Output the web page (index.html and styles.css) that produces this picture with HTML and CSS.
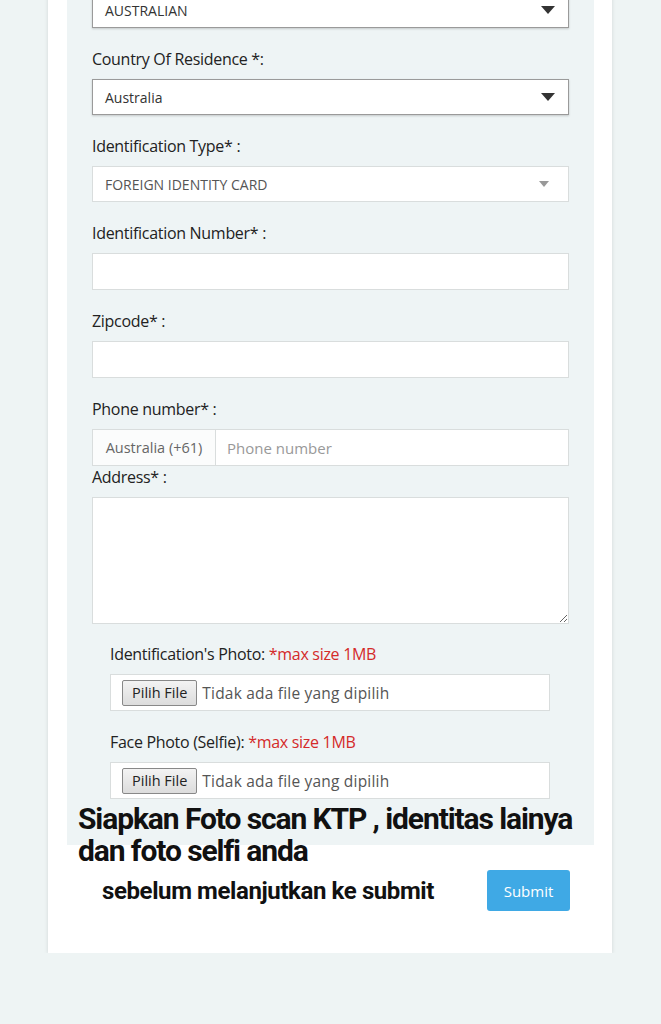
FILE: index.html
```html
<!DOCTYPE html>
<html lang="id">
<head>
    <meta charset="UTF-8">
    <link rel="stylesheet" href="styles.css">
</head>
<body>
    <div class="card">
        <div class="panel">
            <div class="select dark">
                <span>AUSTRALIAN</span>
                <span class="caret"></span>
            </div>

            <label>Country Of Residence *:</label>
            <div class="select dark">
                <span>Australia</span>
                <span class="caret"></span>
            </div>

            <label>Identification Type* :</label>
            <div class="select light">
                <span>FOREIGN IDENTITY CARD</span>
                <span class="caret small"></span>
            </div>

            <label>Identification Number* :</label>
            <input class="field" type="text">

            <label>Zipcode* :</label>
            <input class="field" type="text">

            <label>Phone number* :</label>
            <div class="phone-group">
                <span class="addon">Australia (+61)</span>
                <input class="phone-input" type="text" placeholder="Phone number">
            </div>

            <label class="tight">Address* :</label>
            <textarea class="field area"></textarea>

            <div class="upload">
                <label>Identification's Photo: <span class="warn">*max size 1MB</span></label>
                <div class="file-box">
                    <button class="file-btn">Pilih File</button>
                    <span class="file-name">Tidak ada file yang dipilih</span>
                </div>

                <label>Face Photo (Selfie): <span class="warn">*max size 1MB</span></label>
                <div class="file-box">
                    <button class="file-btn">Pilih File</button>
                    <span class="file-name">Tidak ada file yang dipilih</span>
                </div>
            </div>
        </div>

        <h2 class="notice">Siapkan Foto scan KTP , identitas lainya<br>dan foto selfi anda</h2>

        <div class="submit-row">
            <h3 class="notice-sub">sebelum melanjutkan ke submit</h3>
            <button class="submit">Submit</button>
        </div>
    </div>
</body>
</html>
```

FILE: styles.css
```css
:root {
    --page-bg: #eef4f4;
    --panel-bg: #eef4f5;
    --text-color: #222;
    --field-border: #d9dddd;
    --warn-color: #d42a2a;
    --submit-color: #3fa9e5;
}

body {
    margin: 0;
    background: var(--page-bg);
    font-family: "Open Sans", Arial, sans-serif;
    color: var(--text-color);
}

.card {
    margin: -8px 49px 0 48px;
    background: #fff;
    padding: 0 18px 42px 19px;
    box-shadow: 0 1px 4px rgba(0,0,0,0.12);
}

.panel {
    background: var(--panel-bg);
    padding: 0 25px 46px 25px;
    display: flex;
    flex-direction: column;
}

label {
    display: block;
    font-size: 16px;
    letter-spacing: -0.3px;
    margin: 20px 0 9px;
    line-height: 22px;
}

label.tight {
    margin-top: 0;
}

.select {
    height: 36px;
    display: flex;
    align-items: center;
    justify-content: space-between;
    padding: 0 12px;
    background: #fff;
    font-size: 14px;
    box-sizing: border-box;
}

.select.dark {
    border: 1px solid #9a9a9a;
    box-shadow: 0 1px 2px rgba(0,0,0,0.18);
    color: #333;
}

.select.light {
    border: 1px solid var(--field-border);
    color: #555;
}

.caret {
    width: 0;
    height: 0;
    border-left: 7px solid transparent;
    border-right: 7px solid transparent;
    border-top: 8px solid #333;
    margin-right: 1px;
}

.caret.small {
    border-left-width: 5px;
    border-right-width: 5px;
    border-top: 6px solid #999;
    margin-right: 7px;
}

.field {
    height: 37px;
    border: 1px solid var(--field-border);
    background: #fff;
    box-sizing: border-box;
    font-family: inherit;
    margin: 0;
}

.field.area {
    height: 127px;
    resize: vertical;
}

.phone-group {
    display: flex;
    height: 37px;
    border: 1px solid var(--field-border);
    background: #fff;
    box-sizing: border-box;
}

.addon {
    width: 122px;
    flex-shrink: 0;
    border-right: 1px solid var(--field-border);
    background: #fbfcfc;
    color: #666;
    font-size: 14.5px;
    display: flex;
    align-items: center;
    justify-content: center;
}

.phone-input {
    flex: 1;
    border: none;
    padding: 0 11px;
    font-family: inherit;
    font-size: 15px;
    outline: none;
}

.phone-input::placeholder {
    color: #999;
}

.upload {
    padding: 12px 19px 0 18px;
}

.upload label {
    margin: 20px 0 9px;
}

.upload label:first-child {
    margin-top: 7px;
}

.warn {
    color: var(--warn-color);
}

.file-box {
    height: 37px;
    border: 1px solid var(--field-border);
    background: #fff;
    box-sizing: border-box;
    display: flex;
    align-items: center;
    padding-left: 11px;
    gap: 5px;
}

.file-btn {
    font-family: "Open Sans", Arial, sans-serif;
    font-size: 14.5px;
    padding: 2px 9px 3px;
    border: 1px solid #888;
    border-radius: 2px;
    background: linear-gradient(#f3f3f3, #dcdcdc);
    color: #222;
}

.file-name {
    font-size: 15.5px;
    letter-spacing: 0.2px;
    color: #555;
}

.notice {
    font-family: Roboto, Arial, sans-serif;
    font-weight: bold;
    font-size: 30px;
    line-height: 32px;
    letter-spacing: -1.1px;
    margin: -42px 0 0 11px;
    color: #111;
    position: relative;
}

.submit-row {
    display: flex;
    align-items: center;
    justify-content: space-between;
    padding: 0 24px 0 35px;
    margin-top: 3px;
}

.notice-sub {
    font-family: Roboto, Arial, sans-serif;
    font-weight: bold;
    font-size: 24px;
    letter-spacing: -0.4px;
    margin: 0;
    color: #111;
}

.submit {
    background: var(--submit-color);
    color: #fff;
    border: none;
    border-radius: 3px;
    width: 83px;
    height: 41px;
    font-family: "Open Sans", Arial, sans-serif;
    font-size: 15px;
}
```
